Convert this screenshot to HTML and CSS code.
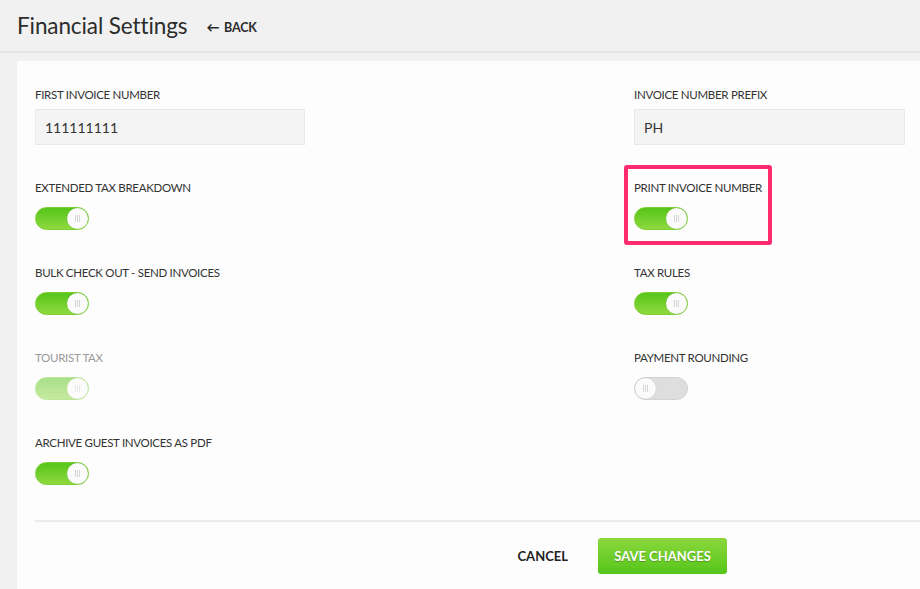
FILE: index.html
```html
<!DOCTYPE html>
<html lang="en">
<head>
    <meta charset="UTF-8">
    <meta name="viewport" content="width=device-width, initial-scale=1.0">
    <title>Financial Settings</title>
    <link rel="stylesheet" href="styles.css">
</head>
<body>

    <div class="page-header">
        <h1>Financial Settings</h1>
        <a class="back-link" href="#"><span class="arrow">&#8592;</span> BACK</a>
    </div>

    <div class="card">
        <div class="settings-grid">
            <div class="field input-field">
                <label>FIRST INVOICE NUMBER</label>
                <input class="text-input" type="text" value="111111111">
            </div>
            <div class="field input-field">
                <label>INVOICE NUMBER PREFIX</label>
                <input class="text-input" type="text" value="PH">
            </div>

            <div class="field toggle-field">
                <label>EXTENDED TAX BREAKDOWN</label>
                <span class="toggle on"><span class="knob"></span></span>
            </div>
            <div class="field toggle-field">
                <div class="highlight">
                    <label>PRINT INVOICE NUMBER</label>
                    <span class="toggle on"><span class="knob"></span></span>
                </div>
            </div>

            <div class="field toggle-field">
                <label>BULK CHECK OUT - SEND INVOICES</label>
                <span class="toggle on"><span class="knob"></span></span>
            </div>
            <div class="field toggle-field">
                <label>TAX RULES</label>
                <span class="toggle on"><span class="knob"></span></span>
            </div>

            <div class="field toggle-field disabled">
                <label>TOURIST TAX</label>
                <span class="toggle on"><span class="knob"></span></span>
            </div>
            <div class="field toggle-field">
                <label>PAYMENT ROUNDING</label>
                <span class="toggle off"><span class="knob"></span></span>
            </div>

            <div class="field toggle-field">
                <label>ARCHIVE GUEST INVOICES AS PDF</label>
                <span class="toggle on"><span class="knob"></span></span>
            </div>
        </div>

        <div class="actions">
            <button class="btn-cancel">CANCEL</button>
            <button class="btn-save">SAVE CHANGES</button>
        </div>
    </div>

</body>
</html>
```

FILE: styles.css
```css
body {
    margin: 0;
    font-family: Lato, "Open Sans", sans-serif;
    background-color: #f1f1f1;
    color: #333;
    overflow: hidden;
}

.page-header {
    display: flex;
    align-items: center;
    height: 51px;
    padding-left: 17px;
    border-bottom: 2px solid #e4e4e4;
}

.page-header h1 {
    margin: 0;
    font-size: 22.5px;
    font-weight: 400;
    color: #2b2b2b;
    letter-spacing: -0.1px;
}

.back-link {
    margin-left: 19px;
    font-size: 12.5px;
    font-weight: 700;
    color: #2b2b2b;
    text-decoration: none;
    margin-top: 2px;
    letter-spacing: -0.2px;
}

.back-link .arrow {
    font-size: 13px;
    font-weight: 900;
    margin-right: 2px;
}

.card {
    margin: 8px 0 0 17px;
    background-color: #fdfdfd;
    padding: 26px 0 0 18px;
    height: 540px;
    box-sizing: border-box;
}

.settings-grid {
    display: grid;
    grid-template-columns: 599px 1fr;
    grid-auto-rows: 85px;
    grid-template-rows: 93px;
}

.field label {
    display: block;
    font-size: 11.5px;
    letter-spacing: -0.3px;
    color: #333;
    margin-bottom: 10px;
    line-height: 16px;
}

.input-field label {
    margin-bottom: 6px;
}

.text-input {
    width: 270px;
    height: 36px;
    box-sizing: border-box;
    border: 1px solid #e8e8e8;
    background-color: #f4f4f4;
    padding: 0 9px;
    font-family: Lato, sans-serif;
    font-size: 14px;
    color: #333;
    outline: none;
}

.input-field:nth-child(2) .text-input {
    width: 271px;
}

.toggle {
    display: inline-block;
    position: relative;
    width: 54px;
    height: 23px;
    margin-top: 1px;
    border-radius: 12px;
    box-sizing: border-box;
}

.toggle.on {
    background: linear-gradient(#56c51a, #8fd93f);
    border: 1px solid #7ccf33;
}

.toggle.off {
    background: #dedede;
    border: 1px solid #d2d2d2;
}

.knob {
    position: absolute;
    top: 0;
    width: 21px;
    height: 21px;
    border-radius: 50%;
    background: #fbfbfb;
    box-shadow: 0 0 1px rgba(0, 0, 0, 0.2);
}

.toggle.on .knob {
    right: 0;
}

.toggle.off .knob {
    left: 0;
}

.knob:after {
    content: '';
    position: absolute;
    left: 8px;
    top: 7px;
    width: 5px;
    height: 7px;
    background: repeating-linear-gradient(90deg, #d6d6d6 0 1px, transparent 1px 2px);
}

.disabled label {
    color: #9a9a9a;
}

.disabled .toggle {
    opacity: 0.5;
}

.highlight {
    display: inline-block;
    margin: -15px 0 0 -10px;
    padding: 11px 6px 8px 6px;
    border: 4px solid #fe2c6e;
    border-radius: 3px;
}

.actions {
    display: flex;
    justify-content: flex-end;
    align-items: center;
    border-top: 2px solid #ececec;
    padding-top: 16px;
    padding-right: 193px;
}

.btn-cancel {
    background: none;
    border: none;
    font-family: Lato, sans-serif;
    font-size: 13px;
    font-weight: 700;
    color: #222;
    cursor: pointer;
    margin-right: 24px;
}

.btn-save {
    width: 129px;
    height: 36px;
    border: none;
    border-radius: 3px;
    background: linear-gradient(#8bd83c, #55c51b);
    color: #fff;
    font-family: Lato, sans-serif;
    font-size: 13px;
    font-weight: 700;
    text-shadow: 0 1px 1px rgba(0, 0, 0, 0.25);
    cursor: pointer;
}
```
